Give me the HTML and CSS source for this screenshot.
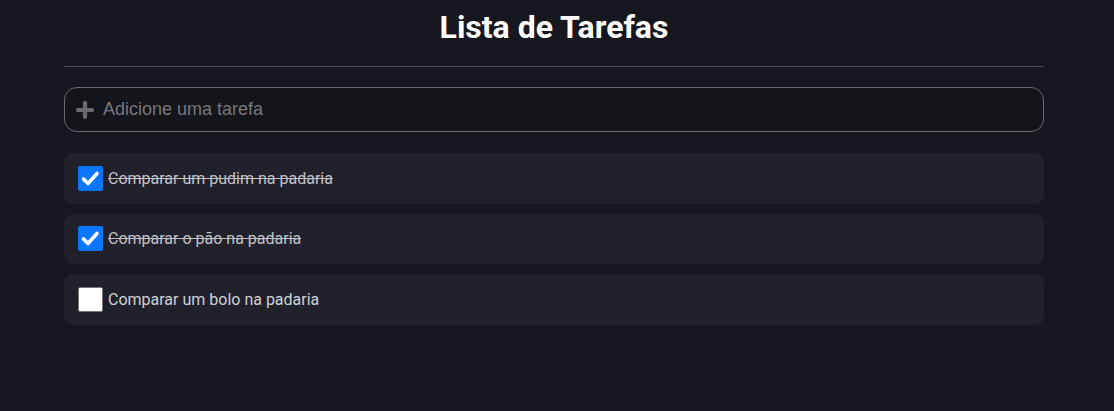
FILE: index.html
```html
<!DOCTYPE html>
<html lang="pt-BR">
<head>
<meta charset="utf-8">
<title>Lista de Tarefas</title>
<link rel="stylesheet" href="styles.css">
</head>
<body>
<main class="app">
  <h1 class="title">Lista de Tarefas</h1>
  <hr class="divider">
  <label class="add">
    <svg class="add-icon" viewBox="0 0 18 18" width="18" height="18" aria-hidden="true">
      <path d="M9 2v14M2 9h14" stroke="#6b6b6f" stroke-width="4.2" stroke-linecap="round"/>
    </svg>
    <input class="add-input" type="text" placeholder="Adicione uma tarefa">
  </label>
  <ul class="tasks">
    <li class="task done">
      <span class="box checked"><svg viewBox="0 0 25 25" width="25" height="25"><path d="M5.5 13l4.5 4.5 9-10" fill="none" stroke="#fff" stroke-width="3.6" stroke-linecap="round" stroke-linejoin="round"/></svg></span>
      <span class="label">Comparar um pudim na padaria</span>
    </li>
    <li class="task done">
      <span class="box checked"><svg viewBox="0 0 25 25" width="25" height="25"><path d="M5.5 13l4.5 4.5 9-10" fill="none" stroke="#fff" stroke-width="3.6" stroke-linecap="round" stroke-linejoin="round"/></svg></span>
      <span class="label">Comparar o pão na padaria</span>
    </li>
    <li class="task">
      <span class="box"></span>
      <span class="label">Comparar um bolo na padaria</span>
    </li>
  </ul>
</main>
</body>
</html>
```
FILE: styles.css
```css
html, body {
  margin: 0;
  padding: 0;
  background: #17181f;
}
body {
  font-family: Roboto, "Liberation Sans", sans-serif;
  color: #fff;
}
.app {
  width: 980px;
  margin-left: 64px;
  padding-top: 8px;
}
.title {
  margin: 0;
  font-size: 32px;
  font-weight: 700;
  text-align: center;
  line-height: 38px;
  color: #fff;
}
.divider {
  margin: 20px 0 0;
  border: 0;
  border-top: 1px solid #4a4a4e;
  height: 0;
}
.add {
  margin-top: 20px;
  height: 45px;
  box-sizing: border-box;
  border: 1px solid #6a6a6e;
  border-radius: 13px;
  background: #14151b;
  display: flex;
  align-items: center;
  padding-left: 11px;
  gap: 9px;
}
.add-icon {
  flex: none;
}
.add-input {
  flex: 1;
  border: 0;
  outline: 0;
  background: transparent;
  font-family: "Liberation Sans", Arial, sans-serif;
  font-size: 18px;
  color: #ccc;
  padding: 0;
}
.add-input::placeholder {
  color: #77777b;
}
.tasks {
  list-style: none;
  margin: 21px 0 0;
  padding: 0;
  display: flex;
  flex-direction: column;
  gap: 10px;
}
.task {
  height: 50.5px;
  background: #21212c;
  border-radius: 9px;
  display: flex;
  align-items: center;
  padding-left: 14px;
  gap: 5px;
}
.box {
  width: 25px;
  height: 25px;
  box-sizing: border-box;
  border-radius: 2px;
  background: #fff;
  border: 1px solid #767676;
  flex: none;
  display: block;
}
.box.checked {
  background: #0b76ff;
  border: 0;
}
.box svg {
  display: block;
}
.label {
  font-size: 16px;
  color: #d0d0d4;
}
.done .label {
  text-decoration: line-through;
  color: #c0c0c4;
}
```
